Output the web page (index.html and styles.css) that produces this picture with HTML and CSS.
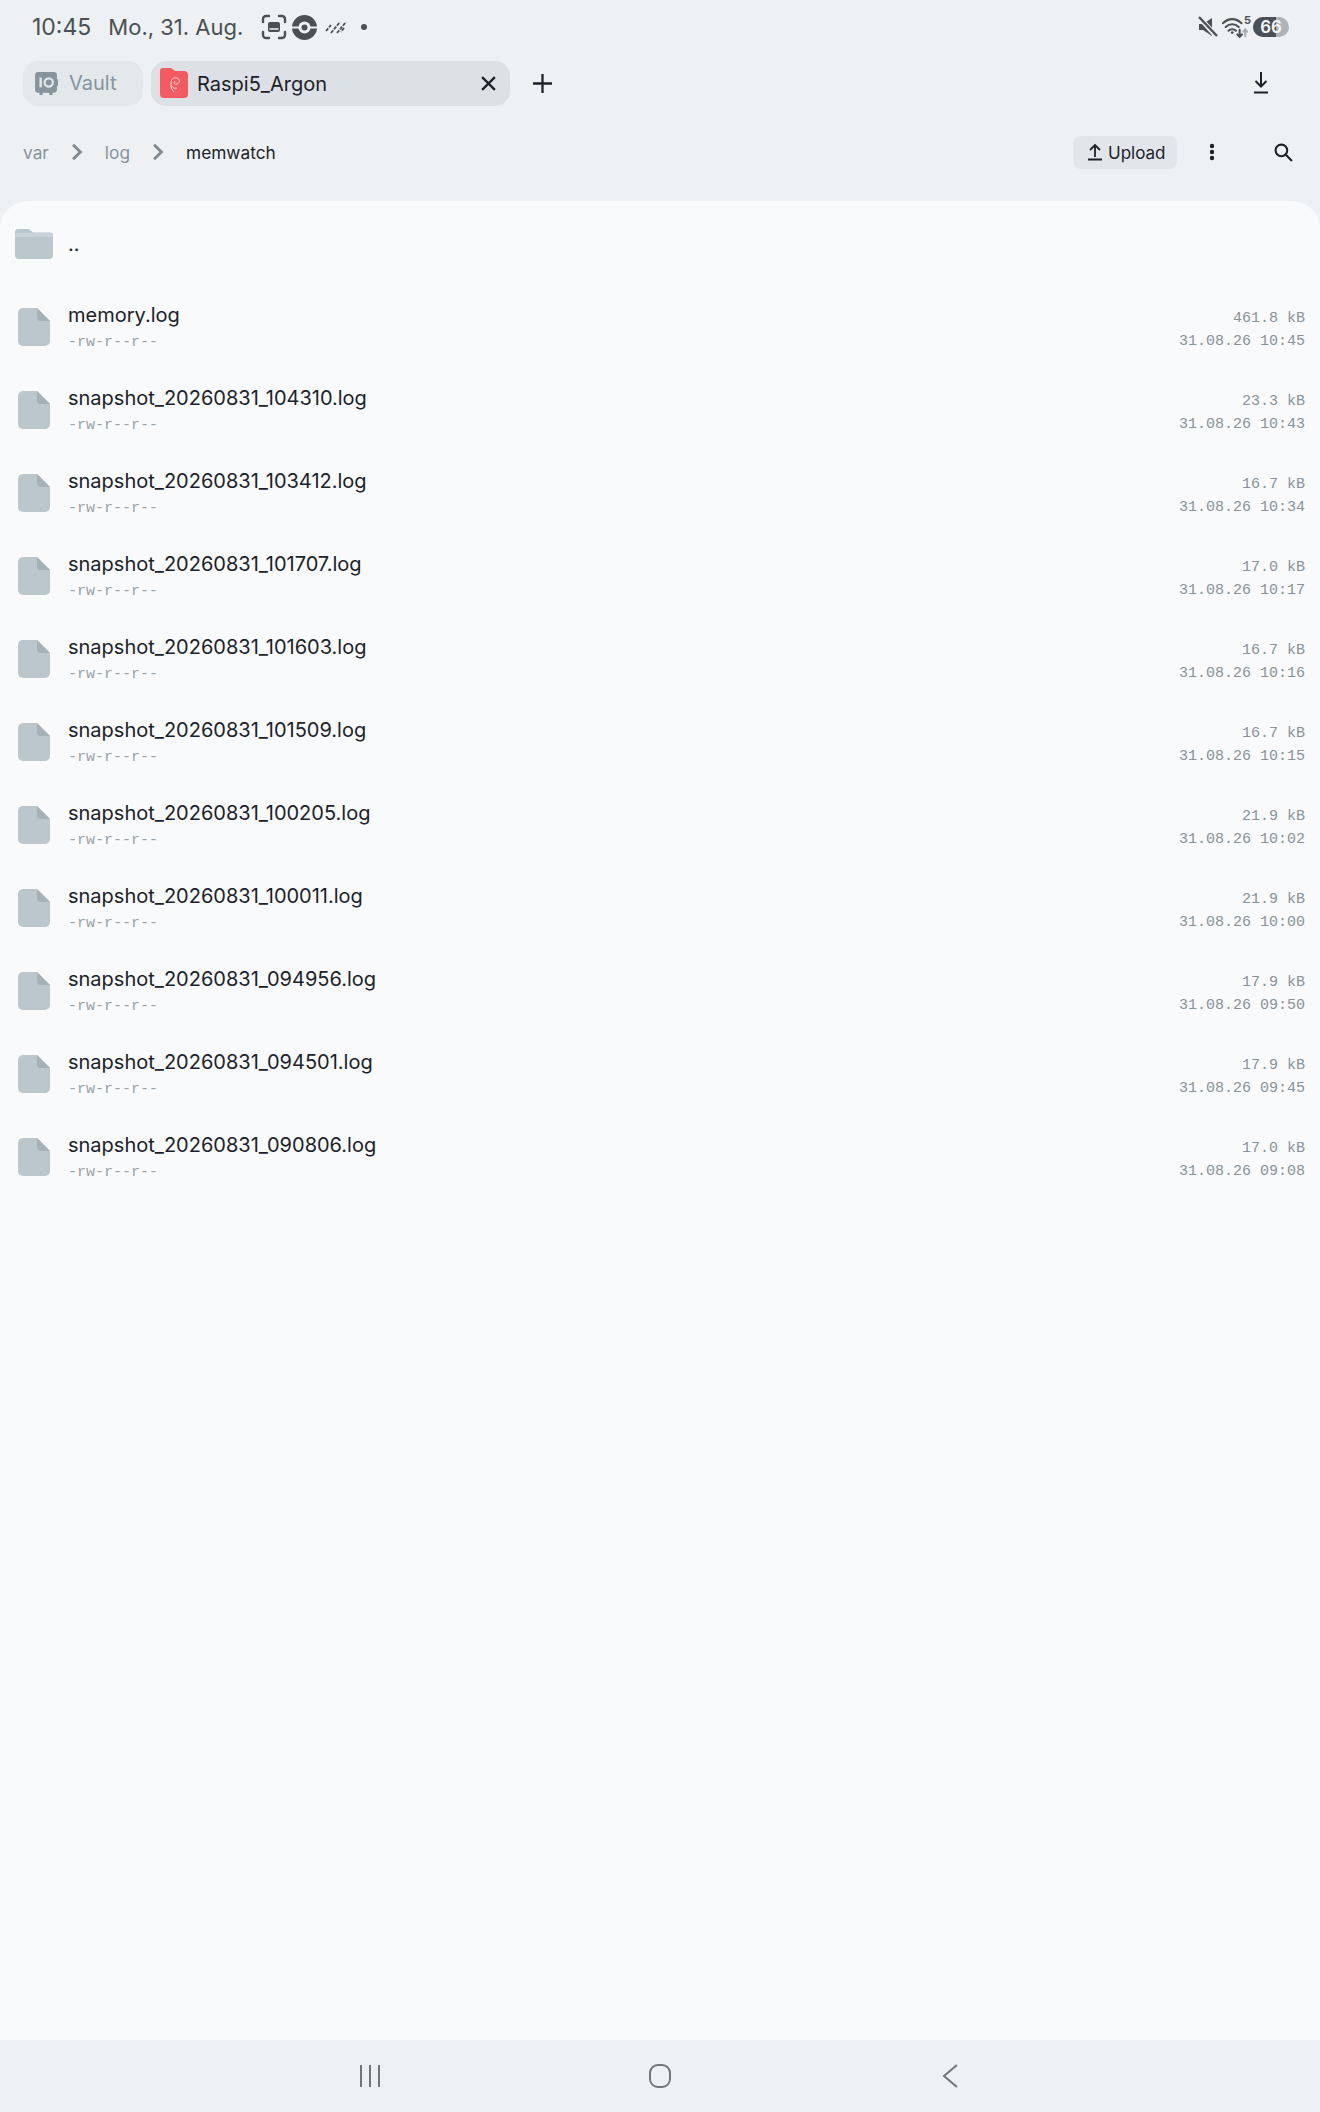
FILE: index.html
```html
<!DOCTYPE html>
<html>
<head>
    <title>Raspi5_Argon</title>
    <link rel="stylesheet" href="styles.css">
</head>
<body>
    <div class="screen">
        <div class="status-bar">
            <span class="clock">10:45</span>
            <span class="date">Mo., 31. Aug.</span>
            <svg class="status-icon shot" width="26" height="26" viewBox="0 0 26 26" fill="none" stroke="#4a5054" stroke-width="2.4" stroke-linecap="round">
                <path d="M2 8V5a3 3 0 0 1 3-3h3M18 2h3a3 3 0 0 1 3 3v3M24 18v3a3 3 0 0 1-3 3h-3M8 24H5a3 3 0 0 1-3-3v-3"/>
                <rect x="7" y="8" width="12" height="10" rx="2" fill="#4a5054" stroke="none"/>
                <path d="M9 15h8" stroke="#eef2f4" stroke-width="1.600"/>
            </svg>
            <svg class="status-icon ball" width="25" height="25" viewBox="0 0 25 25">
                <circle cx="12.500" cy="12.500" r="12.500" fill="#4a5054"/>
                <rect x="0" y="11.500" width="25" height="2" fill="#eef2f4"/>
                <circle cx="12.500" cy="12.500" r="6" fill="#eef2f4"/>
                <circle cx="12.500" cy="12.500" r="3" fill="#4a5054"/>
            </svg>
            <svg class="status-icon stripes" width="22" height="14" viewBox="0 0 22 14" fill="none" stroke="#4a5054" stroke-width="1.800" stroke-dasharray="3.500 1.200">
                <path d="M1 11l5-6M6 13l9-11M12 13l9-11M19 8l-3 4"/>
            </svg>
            <span class="dot"></span>
            <div class="status-right">
                <svg width="22" height="22" viewBox="0 0 22 22">
                    <path d="M2 8h4l9-6v18l-9-6H2z" fill="#4a5054"/>
                    <path d="M1 0l19 21" stroke="#edf1f3" stroke-width="5"/>
                    <path d="M2 1l18 19" stroke="#4a5054" stroke-width="2.400"/>
                </svg>
                <svg class="wifi" width="26" height="24" viewBox="0 0 28 24" fill="none" stroke="#4a5054" stroke-width="2.200" stroke-linecap="round">
                    <path d="M1 8c6-6 14-6 20 0M4 12c4-4 10-4 14 0M7 16c2-2 6-2 8 0"/>
                    <circle cx="11" cy="18" r="1.500" fill="#4a5054" stroke="none"/>
                    <path d="M19 15v7M16.500 20l2.500 2.500 2.500-2.500"/>
                    <path d="M25 22v-7M23 17l2-2.500 2 2.500" stroke="#a9afb2"/>
                </svg>
                <span class="wifi-num">5</span>
                <span class="battery"><span class="battery-fill"></span><span class="battery-num">66</span></span>
            </div>
        </div>

        <div class="tab-bar">
            <div class="tab tab-off">
                <svg width="24" height="24" viewBox="0 0 22 22">
                    <path d="M4 1h14a3 3 0 0 1 3 3v3l1 1v5l-1 1v3a3 3 0 0 1-3 3h-1v2h-3v-2H8v2H5v-2H4a3 3 0 0 1-3-3V4a3 3 0 0 1 3-3z" fill="#87949c"/>
                    <circle cx="13.500" cy="10.500" r="3.800" fill="none" stroke="#e2e7ea" stroke-width="2"/>
                    <rect x="5" y="6" width="2.200" height="9" fill="#e2e7ea"/>
                </svg>
                <span>Vault</span>
            </div>
            <div class="tab tab-on">
                <svg class="tab-logo" width="30" height="30" viewBox="0 0 28 30">
                    <path d="M3 0h8l4 3h9a4 4 0 0 1 4 4v19a4 4 0 0 1-4 4H4a4 4 0 0 1-4-4V3a3 3 0 0 1 3-3z" fill="#f55a60"/>
                    <path d="M17 20c-3 1-6-1-6-5s3-6 6-5 3 5 0 6-4-2-2-3" fill="none" stroke="#fbdcdc" stroke-width="1"/>
                    <path d="M11 17c0 3 1 5 3 7" fill="none" stroke="#fbdcdc" stroke-width="1"/>
                </svg>
                <span class="tab-title">Raspi5_Argon</span>
                <svg width="17" height="17" viewBox="0 0 16 16" stroke="#1c2229" stroke-width="2.200" fill="none">
                    <path d="M2 2l12 12M14 2L2 14"/>
                </svg>
            </div>
            <svg class="tab-add" width="19" height="19" viewBox="0 0 20 20" stroke="#1c2229" stroke-width="2.400" fill="none">
                <path d="M10 0v20M0 10h20"/>
            </svg>
            <svg class="tab-download" width="18" height="22" viewBox="0 0 16 22" stroke="#1c2229" stroke-width="2" fill="none">
                <path d="M8 0v14M2.500 9L8 14.500 13.500 9M1 20.500h14"/>
            </svg>
        </div>

        <div class="path-bar">
            <span class="crumb">var</span>
            <svg class="crumb-sep" width="12" height="18" viewBox="0 0 10 16" fill="none" stroke="#7e8a90" stroke-width="2.600"><path d="M1.500 1.500L8 8l-6.500 6.500"/></svg>
            <span class="crumb">log</span>
            <svg class="crumb-sep" width="12" height="18" viewBox="0 0 10 16" fill="none" stroke="#7e8a90" stroke-width="2.600"><path d="M1.500 1.500L8 8l-6.500 6.500"/></svg>
            <span class="crumb crumb-now">memwatch</span>
            <div class="path-actions">
                <button class="upload-button">
                    <svg width="16" height="18" viewBox="0 0 16 18" stroke="#1c2229" stroke-width="1.800" fill="none">
                        <path d="M8 14V2M3 7l5-5 5 5M1 16.500h14"/>
                    </svg>
                    <span class="upload-label">Upload</span>
                </button>
                <svg class="more" width="6" height="18" viewBox="0 0 6 18" fill="#1c2229">
                    <circle cx="3" cy="3" r="2.200"/><circle cx="3" cy="9" r="2.200"/><circle cx="3" cy="15" r="2.200"/>
                </svg>
                <svg class="search" width="19" height="19" viewBox="0 0 18 18" fill="none" stroke="#1c2229" stroke-width="2">
                    <circle cx="7" cy="7" r="5.500"/><path d="M11 11l6 6"/>
                </svg>
            </div>
        </div>

        <div class="file-panel">
            <div class="file-row parent-row">
                <svg class="folder-icon" width="38" height="30" viewBox="0 0 38 30">
                    <path d="M3 0h11l4 3.500h17a3 3 0 0 1 3 3V26a4 4 0 0 1-4 4H4a4 4 0 0 1-4-4V3a3 3 0 0 1 3-3z" fill="#bcc6cd"/>
                    <path d="M0 7a3 3 0 0 1 3-3h32a3 3 0 0 1 3 3v1H0z" fill="#c9d2d8"/>
                </svg>
                <span class="file-name">..</span>
            </div>
            <div id="fileList"></div>
        </div>

        <div class="nav-bar">
            <svg width="24" height="24" viewBox="0 0 24 24" stroke="#6f777b" stroke-width="2" fill="none"><path d="M3 1v22M12 1v22M21 1v22"/></svg>
            <svg width="24" height="26" viewBox="0 0 24 26" stroke="#6f777b" stroke-width="2" fill="none"><rect x="2" y="2" width="20" height="22" rx="8"/></svg>
            <svg width="18" height="26" viewBox="0 0 18 26" stroke="#6f777b" stroke-width="2" fill="none"><path d="M16 2L3 13l13 11"/></svg>
        </div>
    </div>

    <script src="script.js"></script>
</body>
</html>
```

FILE: styles.css
```css
/* Reset and base styles */
* {
    margin: 0;
    padding: 0;
    box-sizing: border-box;
    font-family: "Inter", "Noto Sans", sans-serif;
}

body {
    background-color: #edf1f3;
    color: #1c2229;
}

.screen {
    display: flex;
    flex-direction: column;
    width: 1320px;
    height: 2112px;
    overflow: hidden;
}

/* Status bar */
.status-bar {
    display: flex;
    align-items: center;
    height: 54px;
    padding: 0 31px 0 32px;
    color: #4a5054;
}

.clock {
    font-size: 23px;
    margin-right: 17px;
}

.date {
    font-size: 22px;
    margin-right: 18px;
}

.status-icon {
    margin-right: 5px;
}

.ball {
    margin-right: 8px;
}

.dot {
    width: 6px;
    height: 6px;
    margin-left: 9px;
    border-radius: 50%;
    background: #4a5054;
}

.status-right {
    display: flex;
    align-items: center;
    margin-left: auto;
}

.status-right svg {
    margin-right: 3px;
}

.wifi-num {
    font-size: 11px;
    font-weight: 700;
    margin: -14px 2px 0 -7px;
}

.battery {
    position: relative;
    display: block;
    width: 36px;
    height: 20px;
    border-radius: 10px;
    background: #aeb3b6;
    overflow: hidden;
}

.battery-fill {
    display: block;
    width: 23px;
    height: 20px;
    background: #4a5054;
}

.battery-num {
    position: absolute;
    top: 0;
    left: 0;
    width: 36px;
    text-align: center;
    color: #f4f6f7;
    font-size: 17px;
    font-weight: 600;
    line-height: 20px;
}

/* Tabs */
.tab-bar {
    display: flex;
    align-items: center;
    height: 58px;
    padding: 0 50px 0 23px;
}

.tab {
    display: flex;
    align-items: center;
    flex-shrink: 0;
    border-radius: 15px;
}

.tab-off {
    width: 120px;
    height: 45px;
    padding-left: 11px;
    gap: 11px;
    background: #e3e8eb;
    color: #87949c;
    font-size: 20px;
}

.tab-on {
    width: 359px;
    height: 45px;
    margin-left: 8px;
    padding: 0 13px 0 8px;
    background: #dce1e5;
    font-size: 20px;
}

.tab-title {
    flex: 1;
    margin-left: 8px;
    padding-top: 2px;
}

.tab-add {
    margin-left: 23px;
}

.tab-download {
    margin-left: auto;
}

/* Breadcrumb */
.path-bar {
    display: flex;
    align-items: center;
    height: 54px;
    margin-top: 13px;
    padding: 0 27px 0 23px;
    font-size: 17.300px;
}

.crumb {
    color: #87949c;
}

.crumb-now {
    color: #1c2229;
}

.crumb-sep {
    margin: 0 22px;
}

.path-actions {
    display: flex;
    align-items: center;
    margin-left: auto;
}

.upload-button {
    display: flex;
    align-items: center;
    gap: 5px;
    width: 104px;
    height: 33px;
    padding-left: 14px;
    border: none;
    border-radius: 8px;
    background: #e1e6ea;
    color: #1c2229;
    font-size: 17px;
}

.upload-label {
    padding-top: 2px;
}

.more {
    margin-left: 32px;
}

.search {
    margin-left: 59px;
}

/* File list */
.file-panel {
    flex: 1;
    margin-top: 22px;
    padding-top: 1px;
    border-radius: 28px 28px 0 0;
    background: #f8fafc;
}

.file-row {
    display: flex;
    align-items: center;
    height: 83px;
    padding-right: 15px;
}

.file-icon {
    margin-left: 18px;
}

.folder-icon {
    margin-left: 15px;
}

.file-name {
    font-size: 20px;
    color: #1c2229;
}

.parent-row .file-name {
    margin-left: 15px;
    margin-top: 1px;
}

.file-text {
    display: flex;
    flex-direction: column;
    gap: 7px;
    margin-left: 18px;
}

.file-perm,
.file-meta span {
    font-family: "Liberation Mono", monospace;
    font-size: 15px;
}

.file-perm {
    color: #98a3a9;
}

.file-meta {
    display: flex;
    flex-direction: column;
    align-items: flex-end;
    gap: 6px;
    margin-top: 6px;
    margin-left: auto;
    color: #87939a;
}

/* Bottom nav */
.nav-bar {
    display: flex;
    align-items: center;
    justify-content: space-between;
    height: 72px;
    padding: 0 361px 0 358px;
}

.nav-bar svg:nth-child(2) {
    margin-right: 3px;
}
```

FILE: script.js
```js
const files = [
    ['memory.log', '461.8 kB', '31.08.26 10:45'],
    ['snapshot_20260831_104310.log', '23.3 kB', '31.08.26 10:43'],
    ['snapshot_20260831_103412.log', '16.7 kB', '31.08.26 10:34'],
    ['snapshot_20260831_101707.log', '17.0 kB', '31.08.26 10:17'],
    ['snapshot_20260831_101603.log', '16.7 kB', '31.08.26 10:16'],
    ['snapshot_20260831_101509.log', '16.7 kB', '31.08.26 10:15'],
    ['snapshot_20260831_100205.log', '21.9 kB', '31.08.26 10:02'],
    ['snapshot_20260831_100011.log', '21.9 kB', '31.08.26 10:00'],
    ['snapshot_20260831_094956.log', '17.9 kB', '31.08.26 09:50'],
    ['snapshot_20260831_094501.log', '17.9 kB', '31.08.26 09:45'],
    ['snapshot_20260831_090806.log', '17.0 kB', '31.08.26 09:08']
];

const fileIcon = `<svg class="file-icon" width="32" height="38" viewBox="0 0 32 38">
    <path d="M5 0h14l13 13v20a5 5 0 0 1-5 5H5a5 5 0 0 1-5-5V5a5 5 0 0 1 5-5z" fill="#bcc6cd"/>
    <path d="M19 0l13 13h-9a4 4 0 0 1-4-4z" fill="#a5b0b7"/>
</svg>`;

document.getElementById('fileList').innerHTML = files.map(function(file) {
    return `<div class="file-row">
        ${fileIcon}
        <div class="file-text">
            <span class="file-name">${file[0]}</span>
            <span class="file-perm">-rw-r--r--</span>
        </div>
        <div class="file-meta"><span>${file[1]}</span><span>${file[2]}</span></div>
    </div>`;
}).join('');
```
